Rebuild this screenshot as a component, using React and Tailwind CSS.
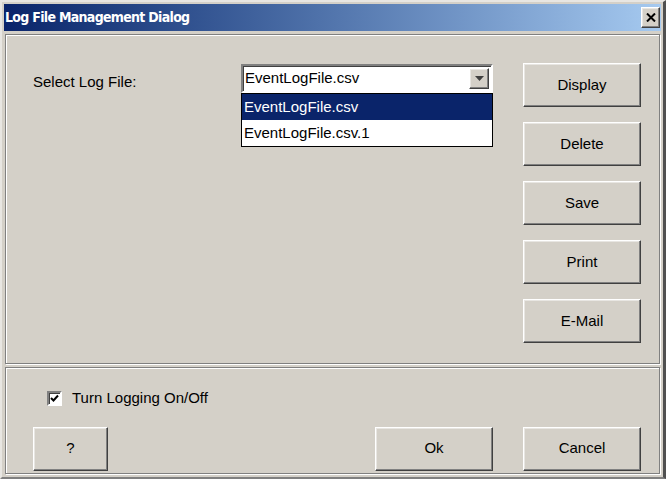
import React, { useState } from 'react'

const raised =
  'bg-[#d4d0c8] border border-t-white border-l-white border-r-[#404040] border-b-[#404040] shadow-[inset_-1px_-1px_0_#808080,inset_1px_1px_0_#e8e6e2]'

const Button = ({ children, width = 'w-[118px]' }) => (
  <button className={`${raised} ${width} h-[44px] text-[15px] text-black`}>
    {children}
  </button>
)

const App = () => {
  const [logging, setLogging] = useState(true)
  const files = ['EventLogFile.csv', 'EventLogFile.csv.1']

  return (
    <div className="w-[666px] h-[479px] bg-[#d4d0c8] font-['Liberation_Sans',Arial,sans-serif] text-black border-t-2 border-l-2 border-t-[#e8e6e2] border-l-[#e8e6e2] border-r-[3px] border-r-[#505050] border-b-2 border-b-[#808080] flex flex-col overflow-hidden">
      <div className="mx-[2px] mt-[2px] h-[27px] flex items-center justify-between pl-[1px] pr-[1px] bg-gradient-to-r from-[#0a246a] to-[#a6caf0]">
        <span className="text-white font-bold text-[14px] font-['DejaVu_Sans',sans-serif] font-stretch-condensed tracking-[-0.7px]">
          Log File Management Dialog
        </span>
        <span className={`${raised} w-[19px] h-[21px] flex items-center justify-center`}>
          <svg width="10" height="9" viewBox="0 0 10 9">
            <path d="M1 0.5 L9 8.5 M9 0.5 L1 8.5" stroke="black" strokeWidth="2" />
          </svg>
        </span>
      </div>

      <div className="flex-1 flex flex-col px-[3px] pt-[3px] pb-[3px] gap-[3px]">
        <div className="h-[330px] border border-[#808080] shadow-[inset_1px_1px_0_white,1px_1px_0_white] flex justify-between pl-[27px] pr-[18px] pt-[28px]">
          <div className="flex items-start">
            <span className="w-[208px] text-[15px] mt-[8px]">Select Log File:</span>
            <div className="relative mt-[1px] w-[252px]">
              <div className="h-[29px] bg-white border-2 border-t-[#808080] border-l-[#808080] border-r-white border-b-white shadow-[inset_1px_1px_0_#404040] flex items-center justify-between pl-[2px] pr-[2px]">
                <span className="text-[15px]">EventLogFile.csv</span>
                <span className={`${raised} w-[20px] h-[21px] flex items-center justify-center`}>
                  <svg width="9" height="5" viewBox="0 0 9 5">
                    <path d="M0 0 H9 L4.5 5 Z" fill="#404040" />
                  </svg>
                </span>
              </div>
              <ul className="border border-black bg-white">
                {files.map((f, i) => (
                  <li
                    key={f}
                    className={`h-[26px] flex items-center pl-[2px] text-[15px] ${i === 0 ? 'bg-[#0a246a] text-white' : ''}`}
                  >
                    {f}
                  </li>
                ))}
              </ul>
            </div>
          </div>
          <div className="flex flex-col gap-[15px]">
            <Button>Display</Button>
            <Button>Delete</Button>
            <Button>Save</Button>
            <Button>Print</Button>
            <Button>E-Mail</Button>
          </div>
        </div>

        <div className="flex-1 border border-[#808080] shadow-[inset_1px_1px_0_white,1px_1px_0_white] flex flex-col pl-[27px] pr-[18px] pt-[19px]">
          <label className="flex items-center gap-[10px] ml-[14px] text-[15px]">
            <span
              onClick={() => setLogging(!logging)}
              className="w-[15px] h-[15px] bg-white border-2 border-t-[#808080] border-l-[#808080] border-r-white border-b-white shadow-[inset_1px_1px_0_#404040] flex items-center justify-center"
            >
              {logging && (
                <svg width="9" height="9" viewBox="0 0 9 9">
                  <path d="M1 4 L3.5 6.5 L8 1.5" stroke="black" strokeWidth="2" fill="none" />
                </svg>
              )}
            </span>
            Turn Logging On/Off
          </label>
          <div className="flex mt-[17px]">
            <Button width="w-[75px]">?</Button>
            <div className="flex-1" />
            <div className="mr-[30px]">
              <Button>Ok</Button>
            </div>
            <Button>Cancel</Button>
          </div>
        </div>
      </div>
    </div>
  )
}

export default App
